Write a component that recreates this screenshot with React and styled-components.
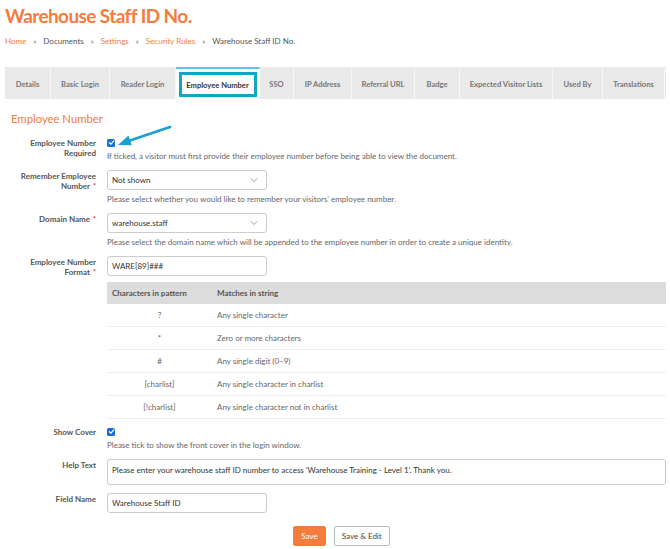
import styled, { createGlobalStyle } from "styled-components";
import { ChevronDown } from "lucide-react";

const GlobalStyle = createGlobalStyle`
     html, body {
          margin: 0;
          padding: 0;
          background: #ffffff;
     }
     body {
          font-family: Lato, "Open Sans", sans-serif;
          color: #555;
     }
`;

const tabs = [
     ["Details", 46],
     ["Basic Login", 59],
     ["Reader Login", 66],
     ["Employee Number", 84],
     ["SSO", 34],
     ["IP Address", 58],
     ["Referral URL", 63],
     ["Badge", 45],
     ["Expected Visitor Lists", 93],
     ["Used By", 50],
     ["Translations", 62],
     ["", 40],
];

const patterns = [
     ["?", "Any single character"],
     ["*", "Zero or more characters"],
     ["#", "Any single digit (0–9)"],
     ["[charlist]", "Any single character in charlist"],
     ["[!charlist]", "Any single character not in charlist"],
];

const Check = () => (
     <CheckBox>
          <svg width="7" height="7" viewBox="0 0 10 10">
               <path d="M2 5.2 L4.2 7.4 L8.2 2.6" fill="none" stroke="#fff" strokeWidth="1.8" strokeLinecap="round" strokeLinejoin="round" />
          </svg>
     </CheckBox>
);

const App = () => {
     return (
          <>
               <GlobalStyle />
               <Page>
                    <Title>Warehouse Staff ID No.</Title>
                    <Breadcrumb>
                         <a>Home</a>
                         <span className="sep">»</span>
                         <span>Documents</span>
                         <span className="sep">»</span>
                         <a>Settings</a>
                         <span className="sep">»</span>
                         <a>Security Rules</a>
                         <span className="sep">»</span>
                         <span>Warehouse Staff ID No.</span>
                    </Breadcrumb>

                    <TabBar>
                         {tabs.map(([t, w], i) => (
                              <Tab key={i} $w={w} $active={t === "Employee Number"}>
                                   {t === "Employee Number" ? <span className="hl">{t}</span> : t}
                              </Tab>
                         ))}
                    </TabBar>

                    <SectionTitle>Employee Number</SectionTitle>

                    <Form>
                         <Label $check>Employee Number Required</Label>
                         <Field>
                              <CheckWrap>
                                   <Check />
                                   <Arrow width="60" height="24" viewBox="0 0 60 24">
                                        <path d="M53 2 L10 16.5" stroke="#1ba1cf" strokeWidth="2.8" strokeLinecap="round" />
                                        <path d="M1 20 L11.5 10.5 L14.8 20.3 Z" fill="#1ba1cf" />
                                   </Arrow>
                              </CheckWrap>
                              <Help>If ticked, a visitor must first provide their employee number before being able to view the document.</Help>
                         </Field>

                         <Label>
                              Remember Employee Number<Req>*</Req>
                         </Label>
                         <Field>
                              <Select>
                                   Not shown
                                   <ChevronDown size={12} strokeWidth={1.4} color="#777" />
                              </Select>
                              <Help>Please select whether you would like to remember your visitors' employee number.</Help>
                         </Field>

                         <Label>
                              Domain Name<Req>*</Req>
                         </Label>
                         <Field>
                              <Select>
                                   warehouse.staff
                                   <ChevronDown size={12} strokeWidth={1.4} color="#777" />
                              </Select>
                              <Help>Please select the domain name which will be appended to the employee number in order to create a unique identity.</Help>
                         </Field>

                         <Label>
                              Employee Number Format<Req>*</Req>
                         </Label>
                         <Field>
                              <Input>WARE[89]###</Input>
                              <Table>
                                   <thead>
                                        <tr>
                                             <th>Characters in pattern</th>
                                             <th>Matches in string</th>
                                        </tr>
                                   </thead>
                                   <tbody>
                                        {patterns.map(([p, m]) => (
                                             <tr key={p}>
                                                  <td>{p}</td>
                                                  <td>{m}</td>
                                             </tr>
                                        ))}
                                   </tbody>
                              </Table>
                         </Field>

                         <Label $check>Show Cover</Label>
                         <Field>
                              <CheckWrap>
                                   <Check />
                              </CheckWrap>
                              <Help>Please tick to show the front cover in the login window.</Help>
                         </Field>

                         <Label>Help Text</Label>
                         <Field>
                              <TextArea>Please enter your warehouse staff ID number to access 'Warehouse Training - Level 1'. Thank you.</TextArea>
                         </Field>

                         <Label>Field Name</Label>
                         <Field>
                              <Input>Warehouse Staff ID</Input>
                         </Field>
                    </Form>

                    <Actions>
                         <Button $primary>Save</Button>
                         <Button>Save &amp; Edit</Button>
                    </Actions>
               </Page>
          </>
     );
};

export default App;

const Page = styled.div`
     padding: 4px 4px 0 5px;
     font-size: 8px;
`;

const Title = styled.h1`
     margin: 0;
     font-size: 19px;
     letter-spacing: -0.6px;
     font-weight: 700;
     line-height: 24px;
     color: #f47c3c;
`;

const Breadcrumb = styled.div`
     display: flex;
     align-items: center;
     gap: 7px;
     margin-top: 7px;
     font-size: 8px;
     color: #555;
     line-height: 12px;

     a {
          color: #f47c3c;
     }

     .sep {
          font-size: 7px;
          color: #666;
     }
`;

const TabBar = styled.div`
     display: flex;
     margin-top: 20px;
     height: 32px;
     background: #e9e9e9;
     overflow: hidden;
     white-space: nowrap;
`;

const Tab = styled.div`
     display: flex;
     align-items: center;
     justify-content: center;
     flex-shrink: 0;
     box-sizing: border-box;
     width: ${(p) => p.$w}px;
     font-size: 7.6px;
     font-weight: 700;
     color: #777;
     border-right: 1px solid #f8f8f8;
     background: ${(p) => (p.$active ? "#fff" : "transparent")};
     border-top: 2px solid ${(p) => (p.$active ? "#5fc4ea" : "transparent")};

     .hl {
          display: flex;
          align-items: center;
          justify-content: center;
          box-sizing: border-box;
          width: 78px;
          height: 25px;
          margin-top: 1px;
          border: 3px solid #10a6c9;
          color: #333;
     }
`;

const SectionTitle = styled.h2`
     margin: 12px 0 0 6px;
     font-size: 11.3px;
     font-weight: 400;
     line-height: 16px;
     color: #f47c3c;
`;

const Form = styled.div`
     display: grid;
     grid-template-columns: 91px 1fr;
     column-gap: 11px;
     row-gap: 8px;
     margin-top: 11px;
`;

const Label = styled.div`
     text-align: right;
     font-weight: 700;
     color: #555;
     line-height: 10px;
     padding-top: ${(p) => (p.$check ? "0" : "1px")};
`;

const Req = styled.span`
     display: inline-block;
     margin-left: 3px;
     line-height: 7px;
     color: #e0393e;
     font-size: 7px;
`;

const Field = styled.div`
     display: flex;
     flex-direction: column;
     gap: 4px;
     min-width: 0;
`;

const CheckWrap = styled.div`
     position: relative;
     height: 9px;
     display: flex;
     align-items: center;
`;

const CheckBox = styled.span`
     display: inline-flex;
     align-items: center;
     justify-content: center;
     width: 8px;
     height: 8px;
     border-radius: 1.5px;
     background: #1a6fe0;
`;

const Arrow = styled.svg`
     position: absolute;
     left: 10px;
     top: -13px;
`;

const Help = styled.div`
     color: #666;
     line-height: 11px;
`;

const Select = styled.div`
     display: flex;
     align-items: center;
     justify-content: space-between;
     box-sizing: border-box;
     width: 160px;
     height: 20px;
     padding: 0 6px 0 4px;
     border: 1px solid #ccc;
     border-radius: 3px;
     color: #333;
`;

const Input = styled.div`
     display: flex;
     align-items: center;
     box-sizing: border-box;
     width: 160px;
     height: 20px;
     padding: 0 4px;
     border: 1px solid #ccc;
     border-radius: 3px;
     color: #333;
`;

const TextArea = styled.div`
     box-sizing: border-box;
     height: 26px;
     padding: 5px 4px;
     border: 1px solid #ccc;
     border-radius: 3px;
     color: #333;
`;

const Table = styled.table`
     width: 100%;
     margin-top: 2px;
     border-collapse: collapse;

     th {
          height: 22px;
          padding: 0 5px;
          background: #dcdcdc;
          text-align: left;
          font-weight: 700;
          color: #555;
     }

     th:first-child {
          width: 95px;
     }

     td {
          height: 22px;
          padding: 0 5px;
          border-bottom: 1px solid #eee;
          color: #666;
     }

     td:first-child {
          text-align: center;
     }
`;

const Actions = styled.div`
     display: flex;
     justify-content: center;
     gap: 8px;
     margin-top: 13px;
     padding-left: 12px;
`;

const Button = styled.button`
     height: 20px;
     padding: 0 7px;
     font-family: Lato, sans-serif;
     font-size: 8px;
     border-radius: 2px;
     border: 1px solid ${(p) => (p.$primary ? "#f47c3c" : "#bbb")};
     background: ${(p) => (p.$primary ? "#f47c3c" : "#fff")};
     color: ${(p) => (p.$primary ? "#fff" : "#444")};
`;
